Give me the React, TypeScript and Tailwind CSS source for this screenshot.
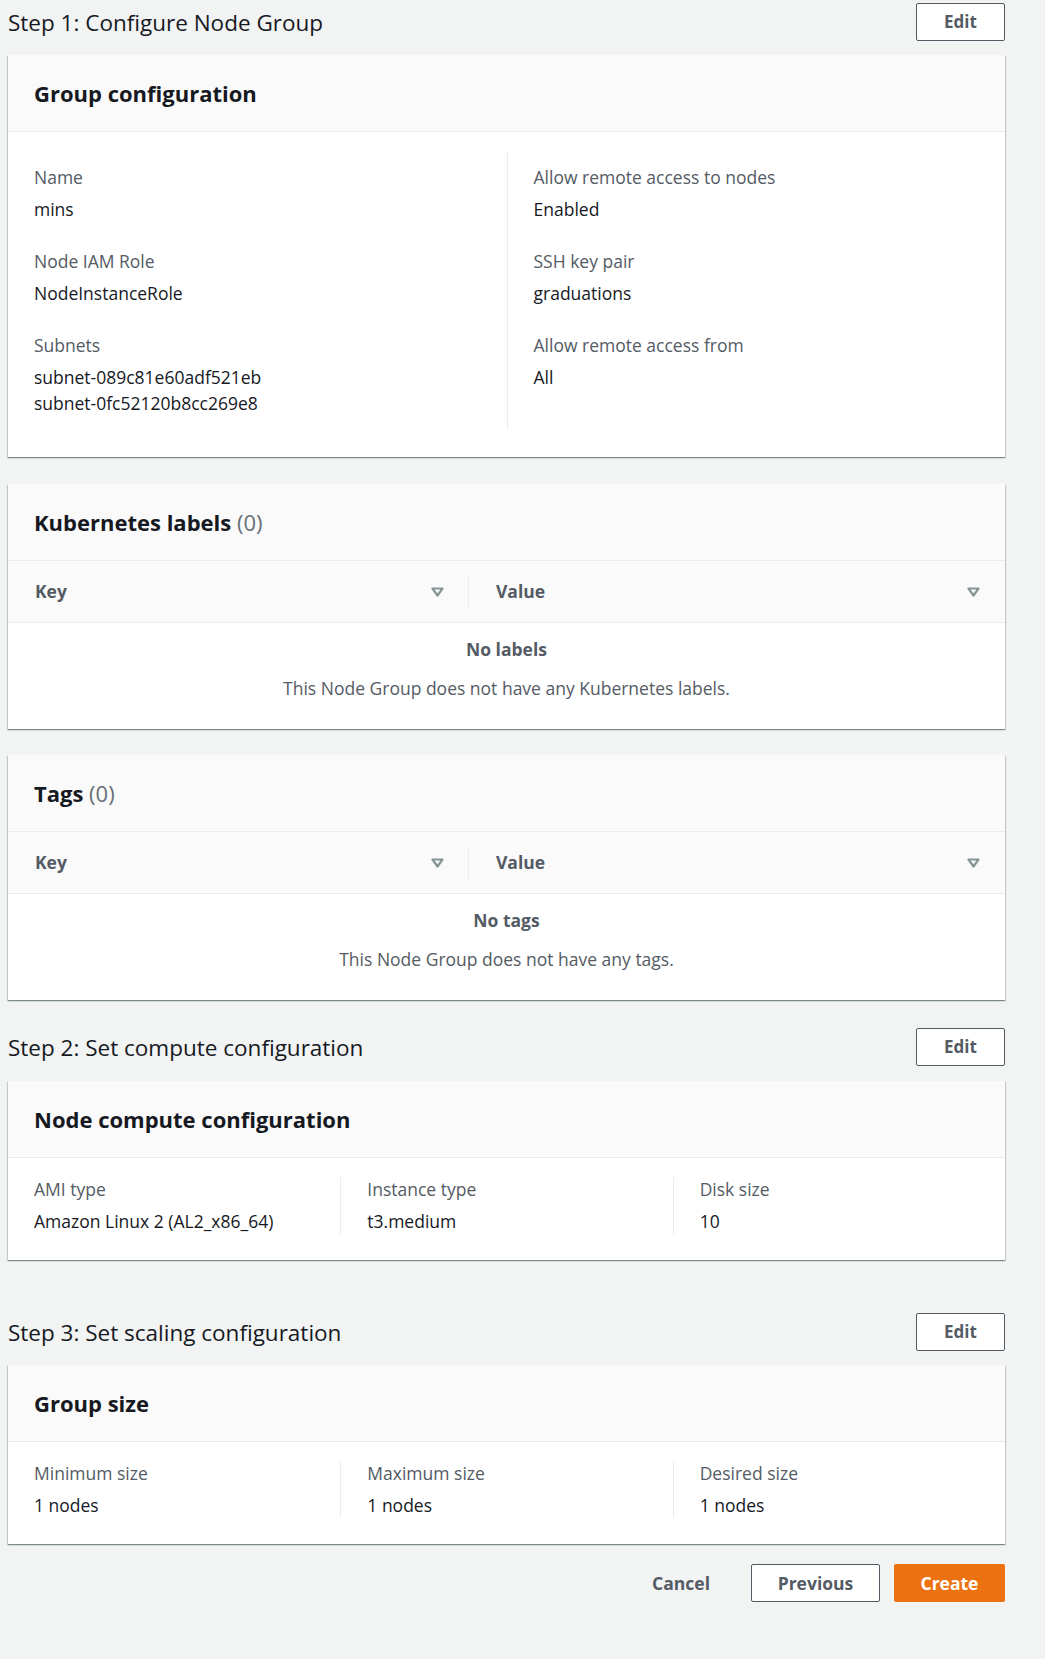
import React from "react";

const font = { fontFamily: '"Open Sans", "Noto Sans", sans-serif' };

function Caret() {
  return (
    <svg width="13" height="10" viewBox="0 0 13 10" className="shrink-0">
      <path d="M1.5 1.5 H11.5 L6.5 8.5 Z" fill="none" stroke="#879596" strokeWidth="2.2" strokeLinejoin="round" />
    </svg>
  );
}

function StepHeader({ title, className = "" }: { title: string; className?: string }) {
  return (
    <div className={`flex items-center justify-between pt-[3px] ${className}`}>
      <h2 className="text-[22.5px] text-[#16191f] leading-[30px] pt-[2px]">{title}</h2>
      <button className="h-[38px] w-[89px] rounded-[2px] border border-[#545b64] bg-white text-[17px] font-bold text-[#545b64]">
        Edit
      </button>
    </div>
  );
}

function Panel({ title, count, children, className = "" }: { title: string; count?: number; children: React.ReactNode; className?: string }) {
  return (
    <section className={`bg-white shadow-[0_1px_1px_0_rgba(0,28,36,0.3),1px_1px_1px_0_rgba(0,28,36,0.15),-1px_1px_1px_0_rgba(0,28,36,0.15)] ${className}`}>
      <div className="flex h-[77px] items-center border-b border-[#eaeded] bg-[#fafafa] px-[26px]">
        <h3 className="text-[22px] font-bold text-[#16191f]">
          {title}
          {count !== undefined && <span className="font-normal text-[#687078]"> ({count})</span>}
        </h3>
      </div>
      {children}
    </section>
  );
}

function Field({ label, values, first }: { label: string; values: string[]; first?: boolean }) {
  return (
    <div className={first ? "" : "mt-[27px]"}>
      <div className="text-[17.5px] leading-[24px] text-[#545b64]">{label}</div>
      <div className="mt-[7px]">
        {values.map((v) => (
          <div key={v} className="text-[17.5px] leading-[26px] text-[#16191f]">
            {v}
          </div>
        ))}
      </div>
    </div>
  );
}

function EmptyTable({ heading, message }: { heading: string; message: string }) {
  return (
    <div>
      <div className="flex h-[62px] items-center border-b border-[#eaeded] bg-[#fafafa]">
        <div className="flex w-[460px] items-center justify-between pl-[27px] pr-[24px]">
          <span className="text-[17.5px] font-bold text-[#545b64]">Key</span>
          <Caret />
        </div>
        <div className="flex h-[32px] flex-1 items-center justify-between border-l border-[#eaeded] pl-[27px] pr-[25px]">
          <span className="text-[17.5px] font-bold text-[#545b64]">Value</span>
          <Caret />
        </div>
      </div>
      <div className="flex flex-col items-center pt-[13px] pb-[28px]">
        <div className="text-[17.5px] font-bold leading-[26px] text-[#545b64]">{heading}</div>
        <div className="mt-[13px] text-[17.5px] leading-[26px] text-[#545b64]">{message}</div>
      </div>
    </div>
  );
}

function ThreeCol({ items }: { items: [string, string][] }) {
  return (
    <div className="grid grid-cols-3 pt-[19px] pb-[26px]">
      {items.map(([label, value], i) => (
        <div key={label} className={`px-[26px] ${i > 0 ? "border-l border-[#eaeded]" : ""}`}>
          <Field label={label} values={[value]} first />
        </div>
      ))}
    </div>
  );
}

export default function App() {
  return (
    <div style={font} className="min-h-[1659px] bg-[#f2f3f3] pl-[8px] pr-[40px]">
      <StepHeader title="Step 1: Configure Node Group" />

      <Panel title="Group configuration" className="mt-[14px]">
        <div className="grid grid-cols-2 pt-[20px] pb-[28px]">
          <div className="px-[26px] py-[13px]">
            <Field label="Name" values={["mins"]} first />
            <Field label="Node IAM Role" values={["NodeInstanceRole"]} />
            <Field label="Subnets" values={["subnet-089c81e60adf521eb", "subnet-0fc52120b8cc269e8"]} />
          </div>
          <div className="border-l border-[#eaeded] px-[26px] py-[13px]">
            <Field label="Allow remote access to nodes" values={["Enabled"]} first />
            <Field label="SSH key pair" values={["graduations"]} />
            <Field label="Allow remote access from" values={["All"]} />
          </div>
        </div>
      </Panel>

      <Panel title="Kubernetes labels" count={0} className="mt-[27px]">
        <EmptyTable heading="No labels" message="This Node Group does not have any Kubernetes labels." />
      </Panel>

      <Panel title="Tags" count={0} className="mt-[26px]">
        <EmptyTable heading="No tags" message="This Node Group does not have any tags." />
      </Panel>

      <StepHeader title="Step 2: Set compute configuration" className="mt-[25px]" />
      <Panel title="Node compute configuration" className="mt-[15px]">
        <ThreeCol
          items={[
            ["AMI type", "Amazon Linux 2 (AL2_x86_64)"],
            ["Instance type", "t3.medium"],
            ["Disk size", "10"],
          ]}
        />
      </Panel>

      <StepHeader title="Step 3: Set scaling configuration" className="mt-[50px]" />
      <Panel title="Group size" className="mt-[14px]">
        <ThreeCol
          items={[
            ["Minimum size", "1 nodes"],
            ["Maximum size", "1 nodes"],
            ["Desired size", "1 nodes"],
          ]}
        />
      </Panel>

      <div className="mt-[20px] flex items-center justify-end">
        <button className="h-[38px] px-[20px] text-[17.5px] font-bold text-[#545b64]">Cancel</button>
        <button className="ml-[21px] h-[38px] w-[129px] rounded-[2px] border border-[#545b64] bg-white text-[17.5px] font-bold text-[#545b64]">
          Previous
        </button>
        <button className="ml-[14px] h-[38px] w-[111px] rounded-[2px] bg-[#ec7211] text-[17.5px] font-bold text-white">
          Create
        </button>
      </div>
    </div>
  );
}
